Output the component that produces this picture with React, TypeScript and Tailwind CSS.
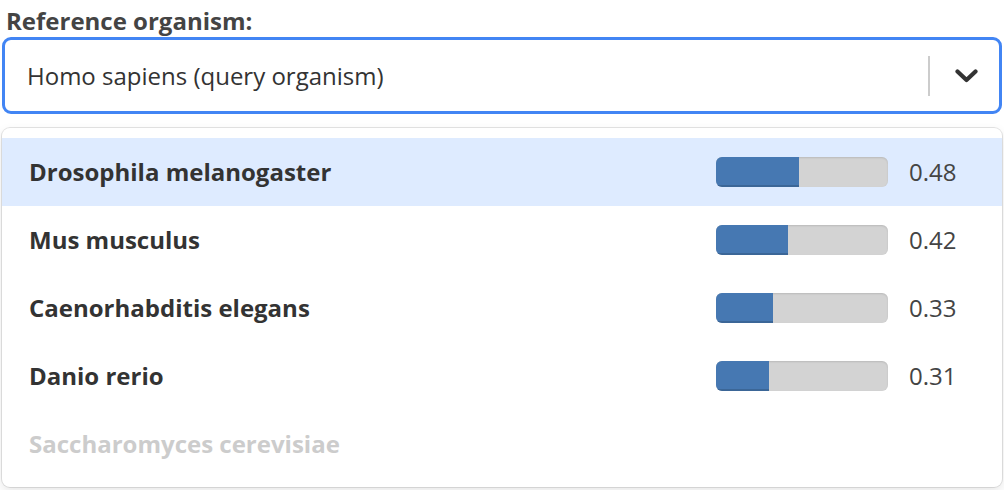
import React from "react"

const organisms = [
  { name: "Drosophila melanogaster", score: 0.48, active: true },
  { name: "Mus musculus", score: 0.42 },
  { name: "Caenorhabditis elegans", score: 0.33 },
  { name: "Danio rerio", score: 0.31 },
  { name: "Saccharomyces cerevisiae", score: null, disabled: true },
]

function ScoreBar({ value }: { value: number }) {
  return (
    <div className="ml-auto h-[30px] w-[172px] overflow-hidden rounded-[6px] bg-[#d3d3d3] shadow-[inset_0_1px_2px_rgba(0,0,0,0.12)]">
      <div
        className="h-full bg-[#4678b2] shadow-[inset_0_-2px_0_rgba(0,0,0,0.15)]"
        style={{ width: `${value * 100}%` }}
      />
    </div>
  )
}

export default function App() {
  return (
    <div className="h-[490px] w-[1004px] bg-white px-[2px] pt-[6px] font-['Open_Sans',sans-serif] text-[24px] text-[#333]">
      <div className="pl-[4px] font-bold leading-[30px] text-[#444]">Reference organism:</div>

      {/* select control */}
      <div className="mt-[1px] flex h-[77px] items-center rounded-[9px] border-[3px] border-[#4285f4] pl-[22px]">
        <span className="leading-[30px]">Homo sapiens (query organism)</span>
        <div className="ml-auto h-[40px] w-[2px] bg-[#cccccc]" />
        <div className="flex w-[69px] items-center pl-[25px]">
          <svg width="23" height="14" viewBox="0 0 23 14" fill="none">
            <polyline
              points="2.5,2.5 11.5,11 20.5,2.5"
              stroke="#333"
              strokeWidth="4.2"
              strokeLinecap="round"
              strokeLinejoin="round"
            />
          </svg>
        </div>
      </div>

      {/* menu */}
      <div className="mt-[14px] h-[359px] rounded-[8px] py-[10px] shadow-[0_0_0_1px_rgba(0,0,0,0.1),0_4px_11px_rgba(0,0,0,0.1)]">
        {organisms.map((o) => (
          <div
            key={o.name}
            className={
              "flex h-[68px] items-center pl-[27px] " + (o.active ? "bg-[#deebff]" : "")
            }
          >
            <span className={"font-bold " + (o.disabled ? "text-[#cccccc]" : "text-[#333]")}>
              {o.name}
            </span>
            {o.score !== null && (
              <>
                <ScoreBar value={o.score} />
                <span className="w-[114px] pl-[21px] text-[#444]">{o.score.toFixed(2)}</span>
              </>
            )}
          </div>
        ))}
      </div>
    </div>
  )
}
